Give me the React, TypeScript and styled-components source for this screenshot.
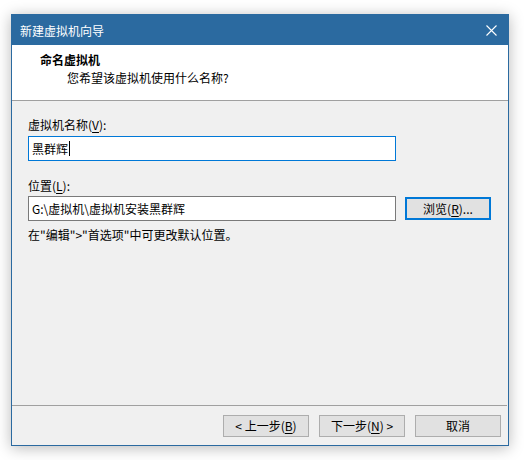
import React from 'react';
import styled, { createGlobalStyle } from 'styled-components';

const GlobalStyle = createGlobalStyle`
  html, body {
    margin: 0;
    padding: 0;
    background: #ffffff;
  }
  body {
    font-family: "Noto Sans CJK SC", "Noto Sans", sans-serif;
    font-size: 12px;
    color: #000;
  }
`;

const Page = styled.div`
  width: 524px;
  height: 460px;
  padding: 14px 0 0 11px;
  box-sizing: border-box;
`;

const Window = styled.div`
  width: 498px;
  height: 432px;
  box-sizing: border-box;
  border: 1px solid #2b6aa0;
  background: #f0f0f0;
  box-shadow: 0 2px 14px rgba(0, 0, 0, 0.28);
  display: flex;
  flex-direction: column;
`;

const TitleBar = styled.div`
  height: 30px;
  flex-shrink: 0;
  background: #2b6aa0;
  display: flex;
  align-items: center;
  justify-content: space-between;
  padding: 0 10px 0 8px;
  color: #ffffff;
  font-size: 12px;
`;

const CloseButton = styled.div`
  width: 14px;
  height: 14px;
  display: flex;
  align-items: center;
  justify-content: center;
`;

const Header = styled.div`
  height: 56px;
  flex-shrink: 0;
  box-sizing: border-box;
  background: #ffffff;
  border-bottom: 1px solid #a0a0a0;
  padding: 7px 0 0 28px;
`;

const HeaderTitle = styled.div`
  font-weight: 700;
  font-size: 12px;
  line-height: 16px;
`;

const HeaderSub = styled.div`
  padding-left: 27px;
  line-height: 16px;
  margin-top: 2px;
`;

const Body = styled.div`
  flex: 1;
  padding: 16px 0 0 16px;
  display: flex;
  flex-direction: column;
`;

const Label = styled.div<{ $gap?: number }>`
  line-height: 16px;
  margin-top: ${p => p.$gap ?? 0}px;
`;

const Row = styled.div<{ $gap?: number }>`
  display: flex;
  align-items: center;
  gap: 9px;
  margin-top: ${p => p.$gap ?? 2}px;
`;

const TextBox = styled.div<{ $focused?: boolean }>`
  width: 368px;
  height: 25px;
  box-sizing: border-box;
  background: #ffffff;
  border: 1px solid ${p => (p.$focused ? '#0078d7' : '#7a7a7a')};
  display: flex;
  align-items: center;
  padding-left: 3px;
  font-size: 12px;
`;

const Caret = styled.span`
  display: inline-block;
  width: 1px;
  height: 15px;
  background: #000;
  margin-left: 1px;
`;

const Hint = styled.div`
  margin-top: 6px;
  line-height: 16px;
`;

const Separator = styled.div`
  height: 1px;
  flex-shrink: 0;
  background: #a0a0a0;
  margin-right: 1px;
`;

const Footer = styled.div`
  height: 39px;
  flex-shrink: 0;
  display: flex;
  justify-content: flex-end;
  gap: 10px;
  padding: 9px 7px 0 0;
  box-sizing: border-box;
`;

const Button = styled.button<{ $default?: boolean }>`
  width: 86px;
  height: ${p => (p.$default ? 23 : 22)}px;
  box-sizing: border-box;
  background: #e1e1e1;
  border: ${p => (p.$default ? '2px solid #0078d7' : '1px solid #adadad')};
  font-family: "Noto Sans CJK SC", "Noto Sans", sans-serif;
  font-size: 12px;
  color: #000;
  padding: 0;
  display: flex;
  align-items: center;
  justify-content: center;
  line-height: 16px;
`;

const U = styled.span`
  text-decoration: underline;
  text-underline-offset: 2px;
`;

export default function App() {
  return (
    <Page>
      <GlobalStyle />
      <Window>
        <TitleBar>
          <span>新建虚拟机向导</span>
          <CloseButton>
            <svg width="11" height="11" viewBox="0 0 11 11">
              <path d="M0.5 0.5 L10.5 10.5 M10.5 0.5 L0.5 10.5" stroke="#ffffff" strokeWidth="1.1" />
            </svg>
          </CloseButton>
        </TitleBar>
        <Header>
          <HeaderTitle>命名虚拟机</HeaderTitle>
          <HeaderSub>您希望该虚拟机使用什么名称?</HeaderSub>
        </Header>
        <Body>
          <Label>虚拟机名称(<U>V</U>):</Label>
          <Row $gap={3}>
            <TextBox $focused>
              黑群辉<Caret />
            </TextBox>
          </Row>
          <Label $gap={17}>位置(<U>L</U>):</Label>
          <Row>
            <TextBox>G:\虚拟机\虚拟机安装黑群辉</TextBox>
            <Button $default>浏览(<U>R</U>)...</Button>
          </Row>
          <Hint>在"编辑"&gt;"首选项"中可更改默认位置。</Hint>
        </Body>
        <Separator />
        <Footer>
          <Button>&lt; 上一步(<U>B</U>)</Button>
          <Button>下一步(<U>N</U>) &gt;</Button>
          <Button>取消</Button>
        </Footer>
      </Window>
    </Page>
  );
}
